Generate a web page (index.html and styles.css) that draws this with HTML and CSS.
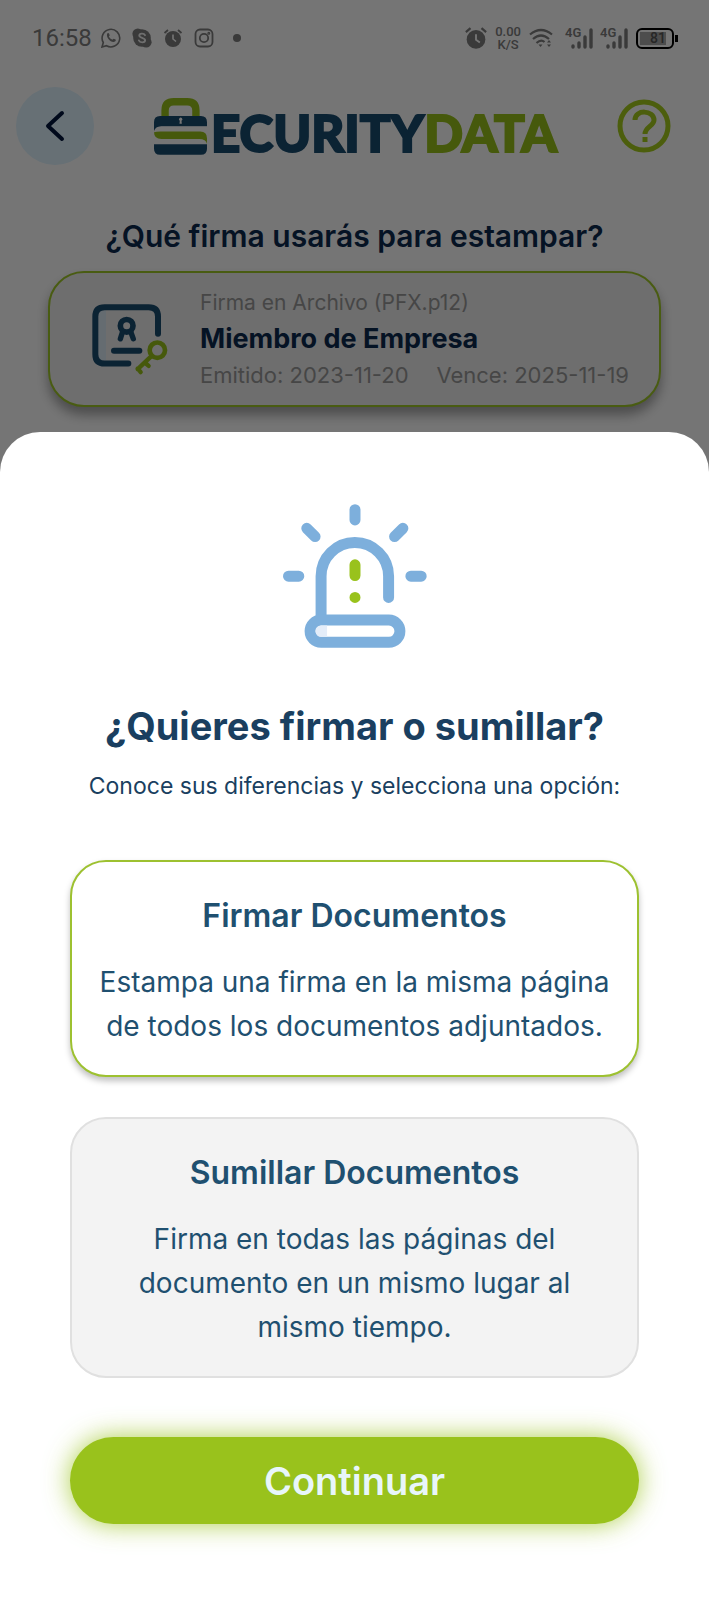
FILE: index.html
```html
<!DOCTYPE html>
<html lang="es">
<head>
<meta charset="utf-8">
<meta name="viewport" content="width=device-width, initial-scale=1">
<title>SecurityData</title>
<link rel="stylesheet" href="styles.css">
</head>
<body>
<div class="screen">
  <div class="app">
    <div class="status">
      <div class="status-side">
        <span class="clock">16:58</span>
        <svg class="status-icon" viewBox="0 0 20 20"><path d="M1 19l1.300-4.500A8.800 8.800 0 1 1 5.500 17.700z" fill="none" stroke="currentColor" stroke-width="1.600"/><path d="M6.200 5.500c.7-.8 1.500-.7 1.800.1l.7 1.700c.1.500-.8 1-.8 1.300.7 1.500 1.800 2.500 3.400 3.200.5 0 1-1.200 1.500-1l1.700.8c.6.400.3 1.400-.5 2-3.500 2-9.500-4-7.800-8.100z" fill="currentColor"/></svg>
        <svg class="status-icon" viewBox="0 0 20 20"><g fill="currentColor"><circle cx="10" cy="10" r="8.800"/><circle cx="5.800" cy="5.800" r="5.400"/><circle cx="14.200" cy="14.200" r="5.400"/></g><path d="M13 7.200C12 5 7.300 5 7.300 7.600c0 2.800 5.800 1.600 5.800 4.700 0 2.700-5.200 2.700-6.200.2" fill="none" stroke="#f2f2f2" stroke-width="1.900" stroke-linecap="round"/></svg>
        <svg class="status-icon" viewBox="0 0 20 20"><circle cx="10" cy="11" r="8" fill="currentColor"/><path d="M1.500 5L5 2M18.500 5L15 2" stroke="currentColor" stroke-width="1.800"/><path d="M10 6.500V11l3 2.500" fill="none" stroke="#fff" stroke-width="1.600"/></svg>
        <svg class="status-icon" viewBox="0 0 20 20" fill="none" stroke="currentColor" stroke-width="1.800"><rect x="1.500" y="1.500" width="17" height="17" rx="4.500"/><circle cx="10" cy="10" r="4.200"/><circle cx="14.800" cy="5.200" r=".6"/></svg>
        <span class="dot"></span>
      </div>
      <div class="status-side status-right">
        <svg class="status-icon alarm" viewBox="0 0 20 20"><circle cx="10" cy="11.300" r="8.500" fill="currentColor"/><path d="M.8 4.600L5 1M19.200 4.600L15 1" stroke="currentColor" stroke-width="2"/><path d="M10 6.500v5l3.500 2.500" fill="none" stroke="#fff" stroke-width="1.700"/></svg>
        <span class="rate"><span>0.00</span><span>K/S</span></span>
        <svg class="wifi" viewBox="0 0 24 20" fill="none" stroke="currentColor" stroke-width="2.200"><path d="M1 6.500Q12-2.500 23 6.500M4 11Q12 4 20 11M7.500 15Q12 11 15.500 14"/><path d="M9.500 16.500h4L11.500 19z" fill="currentColor" stroke="none"/><path d="M18 14.500l2-2.500 2 2.500zM18 16.500l2 2.500 2-2.500z" fill="currentColor" stroke="none"/></svg>
        <span class="signals">
          <svg class="signal" viewBox="0 0 28 24"><text x="0" y="11" class="signal-text">4G</text><path d="M8 20v1M14 17v4M20 11v10M26 4v17" stroke="currentColor" stroke-width="3.400" stroke-linecap="round"/></svg>
          <svg class="signal" viewBox="0 0 28 24"><text x="0" y="11" class="signal-text">4G</text><path d="M8 20v1M14 17v4M20 11v10M26 4v17" stroke="currentColor" stroke-width="3.400" stroke-linecap="round"/></svg>
        </span>
        <span class="battery"><span class="battery-level">81</span></span>
      </div>
    </div>

    <header class="topbar">
      <button class="back" aria-label="Volver"><svg viewBox="0 0 78 78"><path d="M46 26L32 39l14 13" fill="none" stroke="#00143c" stroke-width="4" stroke-linecap="round" stroke-linejoin="round"/></svg></button>
      <div class="logo">
        <svg class="lock" viewBox="465 293 158 170"><path d="M498 350V330Q498 304 524 304H564Q590 304 590 330V350" fill="none" stroke="#99c21c" stroke-width="22"/><path d="M465 365Q465 347 483 347H605Q623 347 623 365V377H487Q467 377 465 395Z" fill="#1a4c70"/><path d="M465 395Q467 379 487 379H623V393H487Z" fill="#fff"/><path d="M465 395Q470 393 485 393H603Q623 393 623 413V430Q620 415 600 415H487Q465 415 465 395Z" fill="#99c21c"/><path d="M465 431H623V444Q623 462 605 462H483Q465 462 465 444Z" fill="#1a4c70"/><path d="M541 370l1-9a5 5 0 1 1 5 0l1 9z" fill="#fff"/></svg>
        <span class="logo-a">ECURITY</span><span class="logo-b">DATA</span>
      </div>
      <button class="help" aria-label="Ayuda"><svg viewBox="0 0 54 54" fill="none" stroke="#a6cc1e"><circle cx="27" cy="27" r="24" stroke-width="5"/><path d="M18 21c0-11 19-10 19 0 0 6-9 7-9 14" stroke-width="5"/><path d="M28 38v5" stroke-width="5"/></svg></button>
    </header>

    <h1 class="question">¿Qué firma usarás para estampar?</h1>
    <article class="cert">
      <svg class="cert-icon" viewBox="276 308 228 218" fill="none" stroke="#1a4c70" stroke-linecap="round" stroke-linejoin="round"><path d="M295 340Q297 329 318 329V480Q297 480 295 465Z" fill="#dcebf7" stroke="none"/><path d="M385 489H314Q286 489 286 461V348Q286 320 314 320H446Q474 320 474 348V400" stroke-width="18"/><circle cx="380" cy="376" r="19" stroke-width="17"/><path d="M367 396l-6 19M393 396l7 19" stroke-width="16"/><path d="M342 451h76" stroke-width="18"/><g stroke="#99c21c"><circle cx="472" cy="449" r="23" stroke-width="14"/><path d="M455 466L413 506M434 486l12 10M413 504l9 11" stroke-width="13"/></g></svg>
      <div class="cert-text">
        <p class="muted kind">Firma en Archivo (PFX.p12)</p>
        <h2 class="cert-name">Miembro de Empresa</h2>
        <p class="muted dates"><span>Emitido: 2023-11-20</span><span>Vence: 2025-11-19</span></p>
      </div>
    </article>
  </div>

  <div class="overlay">
    <section class="sheet" role="dialog" aria-labelledby="sheet-title">
      <svg class="siren" viewBox="68 71 432 433" fill="none" stroke="#7dafdc" stroke-width="33" stroke-linecap="round"><path d="M284 88v31M84 288h31M452 288h31M139 144l25 25M428 144l-25 25M182 415V288A101 101 0 0 1 385 288V352"/><rect x="149" y="420" width="270" height="67" rx="33"/><path d="M200 436H182a17 17 0 0 0 0 34H200z" fill="#e4edf9" stroke="none"/><g stroke="#99c21c"><path d="M284 254v32M284 352v.1"/></g></svg>
      <h2 class="sheet-title" id="sheet-title">¿Quieres firmar o sumillar?</h2>
      <p class="sheet-sub">Conoce sus diferencias y selecciona una opción:</p>
      <div class="options">
        <button class="option option-selected" aria-pressed="true">
          <span class="option-title">Firmar Documentos</span>
          <span class="option-text">Estampa una firma en la misma página de todos los documentos adjuntados.</span>
        </button>
        <button class="option" aria-pressed="false">
          <span class="option-title">Sumillar Documentos</span>
          <span class="option-text">Firma en todas las páginas del documento en un mismo lugar al mismo tiempo.</span>
        </button>
      </div>
      <button class="continue">Continuar</button>
    </section>
  </div>
</div>
</body>
</html>
```
FILE: styles.css
```css
* { box-sizing: border-box; }
body { margin: 0; background: #fff; font-family: Inter, "Liberation Sans", sans-serif; }
h1, h2, p { margin: 0; }
button { font: inherit; border: 0; padding: 0; background: none; cursor: pointer; }
svg { display: block; flex: none; }

.screen { display: grid; min-height: 100vh; }
.app, .overlay { grid-area: 1 / 1; min-width: 0; }

.status { display: flex; justify-content: space-between; align-items: center; height: 76px; padding: 0 35px 0 32px; color: #7e7e7e; font-family: Roboto, sans-serif; }
.status-side { display: flex; align-items: center; gap: 11px; }
.status-right { gap: 8px; }
.clock { margin-right: -2px; font-size: 24px; }
.status-icon { width: 20px; height: 20px; }
.alarm { width: 22px; height: 22px; }
.dot { width: 8px; height: 8px; margin-left: 8px; border-radius: 50%; background: currentColor; }
.rate { display: flex; flex-direction: column; align-items: center; font-size: 13px; line-height: 13px; font-weight: 500; }
.wifi { width: 24px; height: 20px; }
.signals { display: flex; gap: 7px; margin-left: 4px; }
.signal { width: 28px; height: 24px; }
.signal-text { font-size: 13px; font-weight: 600; fill: currentColor; }
.battery { position: relative; width: 38px; height: 21px; padding: 2px; border: 2px solid #000; border-radius: 6px; }
.battery::after { content: ""; position: absolute; right: -6px; top: 5px; width: 3px; height: 7px; background: #000; }
.battery-level { display: block; width: 26px; height: 13px; background: #a8a8a8; color: #555; font-size: 14px; line-height: 13px; text-align: right; font-weight: 500; }

.topbar { display: flex; justify-content: space-between; align-items: center; padding: 11px 38px 0 16px; }
.back { width: 78px; height: 78px; border-radius: 50%; background: #e0f4ff; }
.logo { display: flex; align-items: flex-end; font-family: Lato, sans-serif; font-size: 51px; line-height: 44px; font-weight: 900; }
.lock { width: 53px; height: 57px; margin-right: 4px; }
.logo-a { color: #1a4c70; -webkit-text-stroke: 2px #1a4c70; }
.logo-b { color: #99c21c; -webkit-text-stroke: 2px #99c21c; }
.help svg { width: 54px; height: 54px; }

.question { margin-top: 51px; text-align: center; font-size: 30px; line-height: 40px; font-weight: 600; color: #0c2a50; }
.cert { display: flex; align-items: center; gap: 32px; margin: 15px 48px 0; height: 136px; padding: 0 30px 0 42px; border: 2px solid #a0c828; border-radius: 36px; background: #efefef; box-shadow: 0 8px 12px rgba(0, 0, 0, .35); }
.cert-icon { width: 76px; height: 73px; }
.cert-text { flex: 1; }
.muted { font-size: 22px; line-height: 36px; color: #9a9a9a; }
.kind { font-size: 21px; }
.cert-name { font-size: 27px; line-height: 36px; font-weight: 700; color: #0c2a50; }
.dates { display: flex; justify-content: space-between; white-space: nowrap; }

.overlay { position: relative; display: flex; flex-direction: column; justify-content: flex-end; background: rgba(0, 0, 0, .54); }
.sheet { display: flex; flex-direction: column; align-items: center; padding: 72px 70px 76px; border-radius: 40px 40px 0 0; background: #fff; color: #1a3f60; }
.siren { width: 144px; height: 144px; }
.sheet-title { margin-top: 54px; font-size: 38px; line-height: 48px; font-weight: 700; white-space: nowrap; }
.sheet-sub { margin-top: 20px; font-size: 23px; line-height: 32px; white-space: nowrap; }
.options { display: flex; flex-direction: column; gap: 40px; width: 100%; margin-top: 58px; }
.option { display: flex; flex-direction: column; align-items: center; gap: 24px; padding: 34px 22px 27px; border: 2px solid #e0e0e0; border-radius: 36px; background: #f3f3f3; color: #1f5070; text-align: center; }
.option-selected { border-color: #9dc130; background: #fff; box-shadow: 0 4px 6px rgba(0, 0, 0, .25); }
.option-title { font-size: 32px; line-height: 40px; font-weight: 600; }
.option-text { max-width: 520px; font-size: 28px; line-height: 44px; }
.continue { width: 100%; height: 87px; margin-top: 59px; border-radius: 44px; background: #99c21c; color: #e8f6fa; font-size: 38px; font-weight: 600; box-shadow: 0 0 26px rgba(153, 194, 28, .8); }
```
